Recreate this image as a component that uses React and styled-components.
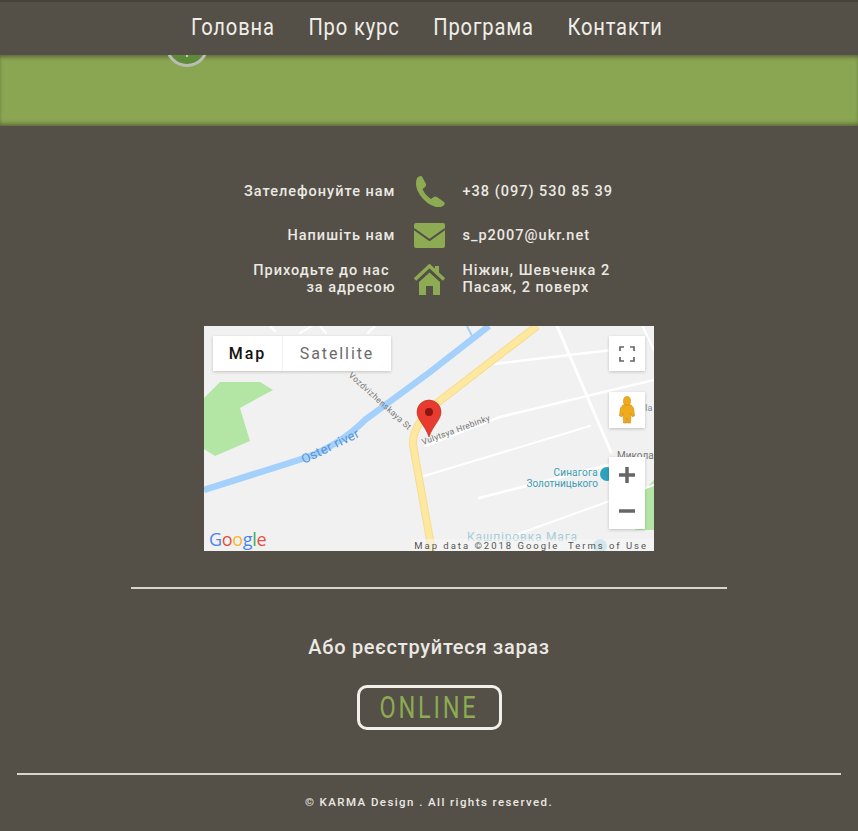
import React from "react";
import styled, { createGlobalStyle } from "styled-components";

const Global = createGlobalStyle`
  html, body { margin: 0; padding: 0; background: #544f47; }
  body { font-family: Roboto, "Liberation Sans", sans-serif; }
`;
const Page = styled.div`
  width: 858px; height: 831px; overflow: hidden; background: #544f47; color: #ebe9e3;
`;
const Header = styled.nav`
  height: 55px; display: flex; justify-content: center; align-items: center;
  border-top: 2px solid #46423b; box-sizing: border-box; position: relative; z-index: 2; background: #544f47;
  padding: 0 4px 4px 0;
`;
const NavList = styled.div`
  display: flex; gap: 40px; transform: scaleX(.84);
`;
const NavLink = styled.a`
  font: 400 24px Roboto, sans-serif; letter-spacing: 1px; color: #f0eee8; white-space: nowrap;
`;
const Band = styled.div`
  height: 71px; position: relative; background: #8ba652;
  box-shadow: inset 0 4px 4px -2px rgba(70,75,50,.7), inset 0 -4px 4px -2px rgba(70,75,50,.7);
`;
const Badge = styled.div`
  position: absolute; left: 165px; top: -33px; width: 44px; height: 45px; border-radius: 50%;
  box-sizing: border-box; border: 3px solid #b9bdb2; background: #5f8a3a;
  &::after {
    content: ""; position: absolute; left: 18px; bottom: 7px; width: 2px; height: 2px; border-radius: 50%; background: #e6e6d8;
  }
`;
const Contacts = styled.section`
  display: flex; flex-direction: column; padding-top: 48px;
`;
const Row = styled.div`
  display: grid; grid-template-columns: 1fr 67px 1fr; align-items: center; height: 34px;
  margin-top: ${p => p.$mt || 0}px;
`;
const Label = styled.div`
  text-align: right; font: 500 14.5px/17px Roboto, sans-serif; letter-spacing: 1px; color: #ebe9e3;
  & > span { display: block; }
  & > span.in { padding-right: 6px; }
`;
const Value = styled.div`
  font: 500 14.5px/17px Roboto, sans-serif; letter-spacing: 1px; color: #ebe9e3;
  & > span { display: block; }
`;
const Icon = styled.svg`
  display: block; justify-self: center; fill: #8cab52;
`;
const MapBox = styled.div`
  position: relative; width: 450px; height: 225px; margin: 30px auto 0; overflow: hidden; background: #f1f1f1;
  font-family: Roboto, sans-serif;
`;
const MapArt = styled.svg`
  display: block; width: 450px; height: 225px;
`;
const MapTypes = styled.div`
  position: absolute; left: 9px; top: 10px; height: 35px; display: flex; gap: 1px; background: #f1f1f1;
  box-shadow: 0 1px 3px rgba(0,0,0,.2);
`;
const MapType = styled.div`
  height: 35px; display: flex; align-items: center; justify-content: center; background: #fff;
  width: ${p => p.$w}px; font-size: 16px; letter-spacing: 1.9px; font-weight: ${p => p.$on ? 500 : 400};
  color: ${p => p.$on ? "#111" : "#6b6b6b"};
`;
const Ctl = styled.div`
  position: absolute; right: 9px; top: ${p => p.$t}px; width: 36px; height: ${p => p.$h}px; background: #fff;
  box-shadow: 0 1px 3px rgba(0,0,0,.2); display: flex; align-items: center; justify-content: center;
`;
const ZoomCtl = styled(Ctl)`
  flex-direction: column; justify-content: space-around;
`;
const Divider = styled.div`
  height: 2px; background: #d8d5ce;
  margin: ${p => p.$m};
`;
const Heading = styled.h2`
  margin: 45px 0 0; text-align: center; font: 500 20px/26px Roboto, sans-serif; letter-spacing: .72px; color: #ebe9e3;
`;
const Online = styled.a`
  display: flex; align-items: center; justify-content: center; box-sizing: border-box; width: 145px; height: 45px;
  margin: 25px auto 0; border: 3px solid #f2f0ea; border-radius: 10px;
`;
const OnlineText = styled.span`
  font: 400 31px Roboto, sans-serif; letter-spacing: 3.6px; color: #8cab52; transform: scaleX(.76); white-space: nowrap;
`;
const Foot = styled.footer`
  text-align: center; font: 500 11.5px/14px Roboto, sans-serif; letter-spacing: 1.42px; color: #ebe9e3; margin-top: 20px;
`;
const GoogleLogo = styled.div`
  position: absolute; left: 5px; bottom: 1px; font: 500 18px/22px "Open Sans", sans-serif; letter-spacing: -.3px;
  text-shadow: 0 0 1px rgba(255,255,255,.7);
`;
const Letter = styled.span`
  color: ${p => p.$c};
`;
const Attribution = styled.div`
  position: absolute; right: 0; bottom: 0; height: 12px; padding: 0 6px 0 2px; background: rgba(245,245,245,.55);
  font-size: 9.5px; line-height: 13px; letter-spacing: 1.98px; color: #555; white-space: nowrap;
`;

const road = { fill: "none", stroke: "#fff", strokeLinecap: "round" };

export default function App() {
  return (
    <Page>
      <Global />
      <Header>
        <NavList>
          <NavLink>Головна</NavLink>
          <NavLink>Про курс</NavLink>
          <NavLink>Програма</NavLink>
          <NavLink>Контакти</NavLink>
        </NavList>
      </Header>
      <Band><Badge /></Band>
      <Contacts>
        <Row>
          <Label>Зателефонуйте нам</Label>
          <Icon width="31" height="32" viewBox="0 0 31 32">
            <path d="M3 3Q6 0 8 1.500L12 9Q12.500 11 10 13L8.500 14Q11 20 17 24L19 22.500Q21 21 23 22L30 27Q32 29 29 31Q26 33 22 32Q12 29 6 20Q0 11 3 3Z" />
          </Icon>
          <Value>+38 (097) 530 85 39</Value>
        </Row>
        <Row $mt={10}>
          <Label>Напишіть нам</Label>
          <Icon width="31" height="25" viewBox="0 0 31 25">
            <rect width="31" height="25" rx="2" />
            <path d="M0 6L15.500 17L31 6" fill="none" stroke="#544f47" strokeWidth="2" />
          </Icon>
          <Value>s_p2007@ukr.net</Value>
        </Row>
        <Row $mt={10}>
          <Label><span className="in">Приходьте до нас</span><span>за адресою</span></Label>
          <Icon width="31" height="31" viewBox="0 0 31 31">
            <path d="M1 15.500L15.500 2L30 15.500" fill="none" stroke="#8cab52" strokeWidth="3.500" />
            <path d="M21 2h4v8l-4-4zM5 18L15.500 8.500L26 18V31H19V22H12V31H5Z" />
          </Icon>
          <Value><span>Ніжин, Шевченка 2</span><span>Пасаж, 2 поверх</span></Value>
        </Row>
      </Contacts>
      <MapBox>
        <MapArt viewBox="204 326 450 225">
          <rect x="204" y="326" width="450" height="225" fill="#f1f1f1" />
          <polygon points="204,398 220,382 260,382 273,390 240,408 250,441 215,456 204,449" fill="#b3e6a5" />
          <polygon points="645,490 654,480 654,530 635,530 638,500" fill="#b3e6a5" />
          <g style={road}>
            <path d="M270 326l5 5M300 333l12-7M320 326l6 7M368 333l7-7" strokeWidth="2" />
            <path d="M557 326L611 452" strokeWidth="3" />
            <path d="M494 364L612 350" strokeWidth="2.500" />
            <path d="M643 327L654 350" strokeWidth="2" />
            <path d="M425 446L500 417L654 380" strokeWidth="2.500" />
            <path d="M424 476L590 426" strokeWidth="2" />
            <path d="M479 498L612 464" strokeWidth="2.500" />
            <path d="M510 537L654 485" strokeWidth="2" />
          </g>
          <path d="M204 490L305 458Q340 445 365 420L430 372L489 326" fill="none" stroke="#a3d1fb" strokeWidth="6.500" />
          <path d="M467 326L472 336" fill="none" stroke="#a3d1fb" strokeWidth="2" />
          <path d="M537 326L437 403Q412 425 413 445L432 551" fill="none" stroke="#f5dc8f" strokeWidth="8" />
          <path d="M537 326L437 403Q412 425 413 445L432 551" fill="none" stroke="#fee8a0" strokeWidth="6" />
          <text transform="translate(348 376) rotate(42)" fontSize="8.500" letterSpacing=".35" fill="#777" fontFamily="Roboto">Vozdvizhenskaya St</text>
          <text transform="translate(423 445) rotate(-20)" fontSize="8.500" letterSpacing=".3" fill="#777" fontFamily="Roboto">Vulytsya Hrebinky</text>
          <text transform="translate(304 464) rotate(-26)" fontSize="13" letterSpacing=".3" fill="#5a94d6" fontFamily="Roboto">Oster river</text>
          <text x="598" y="476" textAnchor="end" fontSize="10" letterSpacing=".2" fill="#3d9cb1" fontFamily="Roboto">Синагога</text>
          <text x="598" y="487" textAnchor="end" fontSize="10" fill="#3d9cb1" fontFamily="Roboto">Золотницького</text>
          <circle cx="607" cy="474" r="7" fill="#2ea3bd" />
          <text x="617" y="459" fontSize="10" fill="#777" fontFamily="Roboto">Микола</text>
          <text x="645" y="411" fontSize="9" fill="#7d8b9a" fontFamily="Roboto">Ia</text>
          <text x="467" y="541" fontSize="12" letterSpacing=".8" fill="#a5cdd8" fontFamily="Roboto">Кашпіровка Мага</text>
          <circle cx="600" cy="546" r="7" fill="#a9d6e2" />
          <path d="M429 437C425 425 417 420 417 412A12 12 0 0 1 441 412C441 420 433 425 429 437Z" fill="#e63b2e" stroke="#b42a22" strokeWidth=".6" />
          <circle cx="429" cy="412" r="4" fill="#8e1410" />
        </MapArt>
        <MapTypes>
          <MapType $w={69} $on>Map</MapType>
          <MapType $w={108}>Satellite</MapType>
        </MapTypes>
        <Ctl $t={10} $h={35}>
          <svg width="16" height="16" viewBox="0 0 16 16"><path d="M1 5V1h4M11 1h4v4M15 11v4h-4M5 15H1v-4" fill="none" stroke="#666" strokeWidth="1.700" /></svg>
        </Ctl>
        <Ctl $t={66} $h={36}>
          <svg width="16" height="28" viewBox="0 0 16 28">
            <ellipse cx="8" cy="5" rx="3.500" ry="4.500" fill="#f0aa1c" stroke="#c98a14" strokeWidth=".6" />
            <path d="M4 9h8l2.500 3 1 8-2.500 .5-1-3-.5 9.500h-3l-.5-5-.5 5h-3l-.5-9.500-1 3L.5 20l1-8z" fill="#f0aa1c" stroke="#c98a14" strokeWidth=".6" />
          </svg>
        </Ctl>
        <ZoomCtl $t={131} $h={72}>
          <svg width="18" height="18" viewBox="0 0 18 18"><path d="M9 1v16M1 9h16" stroke="#666" strokeWidth="3.500" /></svg>
          <svg width="18" height="18" viewBox="0 0 18 18"><path d="M1 9h16" stroke="#666" strokeWidth="3.500" /></svg>
        </ZoomCtl>
        <GoogleLogo>
          <Letter $c="#4a85e8">G</Letter><Letter $c="#e2503f">o</Letter><Letter $c="#f3b92c">o</Letter><Letter $c="#4a85e8">g</Letter><Letter $c="#3aa757">l</Letter><Letter $c="#e2503f">e</Letter>
        </GoogleLogo>
        <Attribution>Map data ©2018 Google&nbsp;&nbsp;Terms of Use</Attribution>
      </MapBox>
      <Divider $m="36px 131px 0" />
      <Heading>Або реєструйтеся зараз</Heading>
      <Online><OnlineText>ONLINE</OnlineText></Online>
      <Divider $m="43px 17px 0" />
      <Foot>© KARMA Design . All rights reserved.</Foot>
    </Page>
  );
}
